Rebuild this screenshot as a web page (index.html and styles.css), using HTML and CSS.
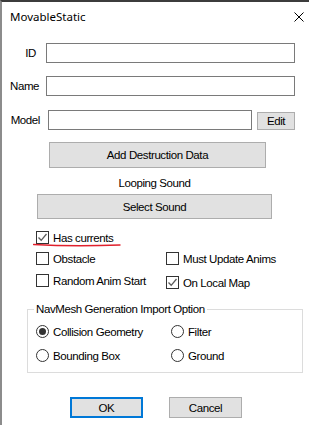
FILE: index.html
```html
<!DOCTYPE html>
<html lang="en">
<head>
  <meta charset="UTF-8" />
  <title>MovableStatic</title>
  <link rel="stylesheet" href="styles.css">
</head>
<body>
  <div class="window">
    <div class="titlebar">
      <span class="title">MovableStatic</span>
      <svg class="close" width="10" height="10" viewBox="0 0 10 10">
        <path d="M0.5 0.5 L9.5 9.5 M9.5 0.5 L0.5 9.5" stroke="#000" stroke-width="1" fill="none"/>
      </svg>
    </div>

    <div class="content">
      <div class="field-row">
        <label class="field-label id-label" for="id">ID</label>
        <input class="textbox wide" type="text" id="id"/>
      </div>
      <div class="field-row">
        <label class="field-label" for="name">Name</label>
        <input class="textbox wide" type="text" id="name"/>
      </div>
      <div class="field-row">
        <label class="field-label model-label" for="model">Model</label>
        <input class="textbox model-box" type="text" id="model"/>
        <button class="btn edit-btn">Edit</button>
      </div>

      <button class="btn destruction-btn">Add Destruction Data</button>
      <div class="sound-label">Looping Sound</div>
      <button class="btn sound-btn">Select Sound</button>

      <div class="check-row first-check">
        <span class="box checked"><svg width="11" height="11" viewBox="0 0 11 11"><path d="M1.5 5.5 L4.2 8.3 L9.5 2" stroke="#5c5c5c" stroke-width="1.3" fill="none"/></svg></span>
        <span>Has currents</span>
      </div>

      <div class="check-grid">
        <div class="check-row"><span class="box"></span><span>Obstacle</span></div>
        <div class="check-row"><span class="box"></span><span>Must Update Anims</span></div>
        <div class="check-row"><span class="box"></span><span>Random Anim Start</span></div>
        <div class="check-row lower">
          <span class="box checked"><svg width="11" height="11" viewBox="0 0 11 11"><path d="M1.5 5.5 L4.2 8.3 L9.5 2" stroke="#5c5c5c" stroke-width="1.3" fill="none"/></svg></span>
          <span>On Local Map</span>
        </div>
      </div>

      <fieldset class="group">
        <legend>NavMesh Generation Import Option</legend>
        <div class="radio-grid">
          <div class="radio-row"><span class="radio selected"></span><span>Collision Geometry</span></div>
          <div class="radio-row"><span class="radio"></span><span>Filter</span></div>
          <div class="radio-row"><span class="radio"></span><span>Bounding Box</span></div>
          <div class="radio-row"><span class="radio"></span><span>Ground</span></div>
        </div>
      </fieldset>

      <div class="actions">
        <button class="btn ok-btn">OK</button>
        <button class="btn">Cancel</button>
      </div>
    </div>

    <svg class="scribble" width="90" height="6" viewBox="0 0 90 6">
      <path d="M0.5 2.5 Q40 4.8 87 3" stroke="#e0202c" stroke-width="1.4" fill="none" stroke-linecap="round"/>
    </svg>
  </div>
</body>
</html>
```

FILE: styles.css
```css
body {
  margin: 0;
  background-color: #fff;
  font-family: "Liberation Sans", Arial, sans-serif;
  font-size: 11.5px;
  letter-spacing: -0.4px;
  color: #000;
}
.window {
  position: relative;
  width: 309px;
  height: 425px;
  box-sizing: border-box;
  border-top: 2px solid #3c3c3c;
  border-left: 2px solid #8c8c8c;
  overflow: hidden;
}
.titlebar {
  height: 29px;
  display: flex;
  align-items: center;
  justify-content: space-between;
  padding: 0 5px 0 8px;
  font-family: "Noto Sans", sans-serif;
  font-size: 11.5px;
  letter-spacing: 0;
}
.content {
  padding: 12px 0 0 8px;
}
.field-row {
  display: flex;
  align-items: center;
  height: 20px;
  margin-bottom: 13px;
}
.field-row:nth-child(2) {
  margin-bottom: 14px;
}
.field-label {
  width: 28px;
  text-align: right;
  margin-right: 8px;
}
.id-label {
  width: 26px;
  margin-right: 10px;
}
.model-label {
  width: 30px;
  margin-right: 8px;
}
.textbox {
  height: 20px;
  box-sizing: border-box;
  border: 1px solid #7a7a7a;
  padding: 0 3px;
  margin: 0;
  font: inherit;
}
.wide {
  width: 249px;
}
.model-box {
  width: 204px;
}
.btn {
  background-color: #e1e1e1;
  border: 1px solid #adadad;
  box-sizing: border-box;
  font: inherit;
  letter-spacing: inherit;
  color: #000;
  padding: 0;
  margin: 0;
}
.edit-btn {
  width: 38px;
  height: 18px;
  margin-left: 5px;
  margin-top: 1px;
}
.destruction-btn {
  display: block;
  width: 217px;
  height: 26px;
  margin-left: 39px;
  margin-top: -1px;
}
.sound-label {
  width: 235px;
  margin-left: 27px;
  margin-top: 7px;
  line-height: 16px;
  text-align: center;
}
.sound-btn {
  display: block;
  width: 235px;
  height: 25px;
  margin-left: 27px;
  margin-top: 3px;
}
.check-row {
  display: flex;
  align-items: center;
  gap: 4px;
  height: 13px;
}
.first-check {
  margin-left: 26px;
  margin-top: 12px;
}
.check-grid {
  display: grid;
  grid-template-columns: 130px auto;
  row-gap: 9px;
  margin-left: 26px;
  margin-top: 8px;
}
.lower {
  margin-top: 2px;
}
.box {
  width: 13px;
  height: 13px;
  box-sizing: border-box;
  border: 1px solid #333;
  background-color: #fff;
  display: flex;
  align-items: center;
  justify-content: center;
}
.group {
  width: 276px;
  box-sizing: border-box;
  margin: 12px 0 0 17px;
  padding: 8px 8px 10px 8px;
  border: 1px solid #dcdcdc;
}
.group legend {
  padding: 0 2px;
  margin-left: -2px;
  line-height: 16px;
}
.radio-grid {
  display: grid;
  grid-template-columns: 135px auto;
  row-gap: 11px;
}
.radio-row {
  display: flex;
  align-items: center;
  gap: 4px;
  height: 13px;
}
.radio {
  width: 13px;
  height: 13px;
  box-sizing: border-box;
  border: 1px solid #333;
  border-radius: 50%;
  display: flex;
  align-items: center;
  justify-content: center;
}
.radio.selected::after {
  content: "";
  width: 7px;
  height: 7px;
  border-radius: 50%;
  background-color: #333;
}
.actions {
  display: flex;
  gap: 26px;
  margin: 24px 0 0 60px;
}
.actions .btn {
  width: 73px;
  height: 21px;
}
.ok-btn {
  border: 2px solid #0078d7;
}
.scribble {
  position: absolute;
  left: 31px;
  top: 240px;
}
```
